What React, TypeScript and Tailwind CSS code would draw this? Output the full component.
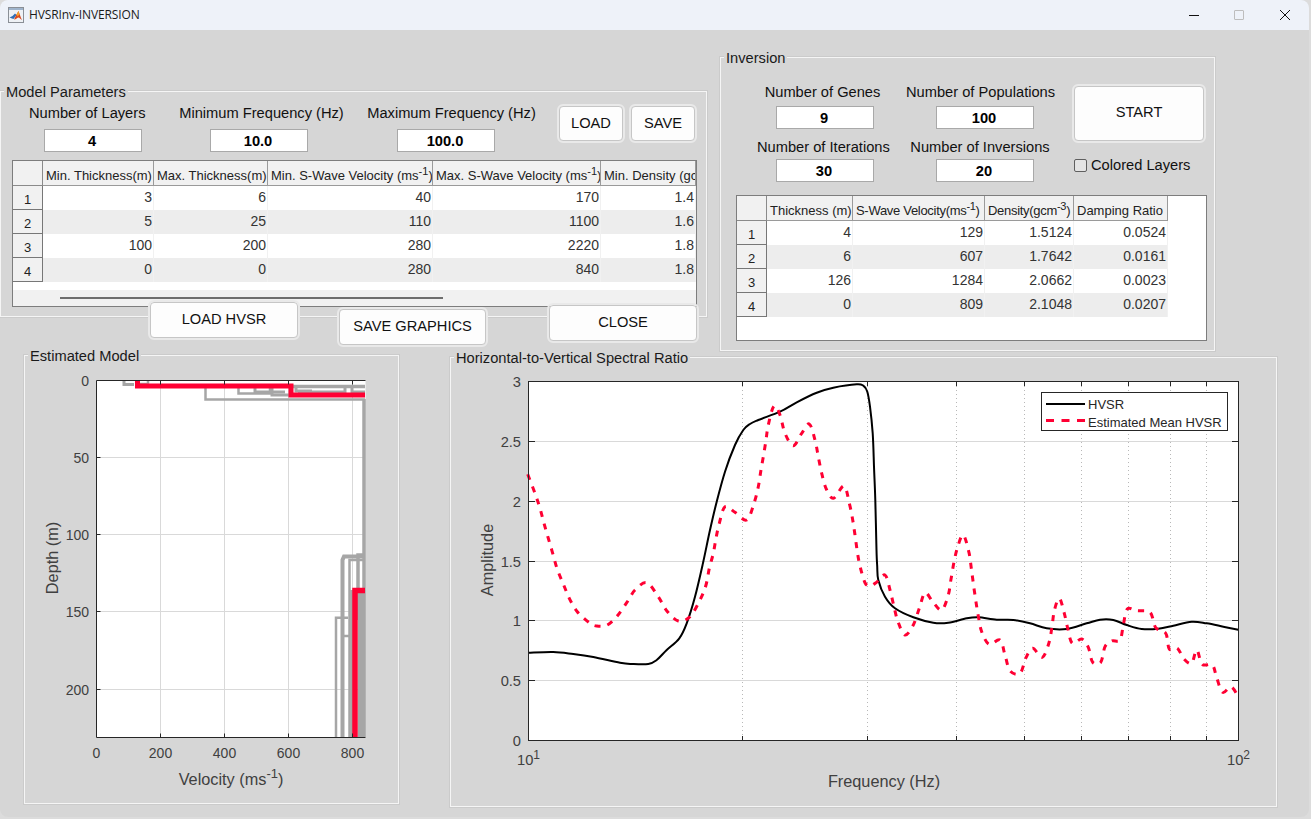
import React from 'react';

type Pt = [number, number];

const hvsr: Pt[] = [[528.3,652.7],[553.3,652],[573.3,654],[593.3,657],[620,662.7],[631.7,664],[648.3,664],[656.7,660],[666.7,650],[679.3,638.3],[686.7,623.3],[695,596.7],[703,563],[710,530],[716.7,501.7],[725,471.7],[735,445],[743.3,430],[750,424],[758.3,420],[780,411.7],[796.7,402.3],[816.7,392.7],[833.3,387.7],[856.7,384.3],[863.3,385.7],[867.3,391.7],[870,406.7],[872.7,433.3],[874,466.7],[875.3,500],[876.5,550],[877.2,566],[878.3,580],[885,596.7],[895,608.3],[913.3,617.3],[933.3,622.7],[948.3,622.7],[966.7,618.3],[978.3,617.3],[996.7,619.7],[1013.3,620],[1030,623.3],[1046.7,628.3],[1066.7,629],[1086.7,623.3],[1100,619.7],[1113.3,620],[1126.7,625],[1141.7,629],[1158.3,628.7],[1173.3,625.7],[1191.7,621.7],[1206.7,623.3],[1223.3,626.7],[1238.3,629.7]];

const estimated: Pt[] = [[527.7,474.3],[535,493.3],[540,508.3],[544,523.3],[548.3,538.3],[552.7,553.3],[557.3,569.3],[563.3,584],[569.3,598.3],[577.3,611.7],[589.3,622.7],[596.7,626],[606.7,625.3],[616.7,616.7],[626.7,602.7],[635,590],[646.7,582.7],[658.3,596.7],[666.7,610.7],[678.3,621],[690,616.7],[700,600],[706,585],[709.3,568.3],[713.3,553.3],[716,538.3],[719.3,523.3],[725,506.7],[735,512.3],[746.7,520],[754,503.3],[758.3,486.7],[760.7,471.7],[763.3,456.7],[766,440],[768.3,425],[774,406],[780,415],[785,433.3],[793.3,445.7],[801.7,433.3],[809.3,424],[815,440],[818.3,456.7],[821.7,473.3],[826,488.3],[833.3,498.3],[844,486],[849.3,503.3],[852.7,520],[855,535],[857.3,551.7],[860,566],[865,582.7],[870,586],[876,582.7],[885,575],[890,590],[894,606.7],[898,621.7],[905,635],[913.3,625],[919.3,608.3],[925,592.7],[932.7,601.7],[941.7,610],[948.3,595],[951,579.3],[954,562],[957.7,546.7],[963.3,535],[969,552.7],[971.3,568.3],[973.3,583.3],[975.7,600],[978.3,616],[981.7,631.7],[989,644.3],[1000,640],[1005,655],[1010,670.7],[1020,673.3],[1026,657.7],[1032.7,648.3],[1042.3,657.3],[1049,642.7],[1052,626.7],[1054.3,610.7],[1059.3,598.3],[1064.3,613.3],[1067.7,628.3],[1072.3,643.3],[1081.7,639],[1088.3,647.3],[1092.7,662.3],[1100.7,662.3],[1105,646.7],[1111.7,641],[1120,640],[1123.3,625],[1127.3,609],[1136.7,610.7],[1150,612.3],[1155.7,627.7],[1165.7,633.3],[1169.3,649],[1177.3,648.3],[1184,659],[1191.7,663.3],[1196.7,650],[1202.3,664.3],[1212.3,665],[1216.7,677.7],[1222.7,692.3],[1231,686.7],[1238.3,696.7]];

// catmull-rom through the traced points
function smooth(pts: Pt[]) {
  let d = `M${pts[0][0]} ${pts[0][1]}`;
  for (let i = 0; i < pts.length - 1; i++) {
    const p0 = pts[Math.max(i - 1, 0)];
    const p1 = pts[i];
    const p2 = pts[i + 1];
    const p3 = pts[Math.min(i + 2, pts.length - 1)];
    const c1x = p1[0] + (p2[0] - p0[0]) / 6;
    const c1y = p1[1] + (p2[1] - p0[1]) / 6;
    const c2x = p2[0] - (p3[0] - p1[0]) / 6;
    const c2y = p2[1] - (p3[1] - p1[1]) / 6;
    d += ` C${c1x.toFixed(1)} ${c1y.toFixed(1)} ${c2x.toFixed(1)} ${c2y.toFixed(1)} ${p2[0]} ${p2[1]}`;
  }
  return d;
}

const grayProfiles: { points: string; w: number }[] = [
  { points: '124,380 124,384.5 134,384.5', w: 3 },
  { points: '148,380 148,384 140,384', w: 2.5 },
  { points: '205.5,388 205.5,399.5 365,399.5', w: 2.5 },
  { points: '238.5,388 238.5,393.5 270,393.5 270,388', w: 2.5 },
  { points: '255,388 255,392 285,392', w: 3 },
  { points: '272,388 272,395 322,395', w: 3 },
  { points: '292,386.5 365,386.5', w: 3.5 },
  { points: '296,385 296,391 312,391', w: 3 },
  { points: '298,392 322,392 345,392 345,385', w: 3 },
  { points: '352,386 352,392 365,392', w: 3 },
  { points: '364,399 364,737', w: 3.5 },
  { points: '342.5,737 342.5,560 344,556.5 365,556.5', w: 4 },
  { points: '349.5,737 349.5,560 365,560', w: 2.5 },
  { points: '336,737 336,617.7 348,617.7', w: 2.5 },
  { points: '358,620 358,555 365,555', w: 3.5 },
  { points: '352,737 352,590', w: 3.5 },
  { points: '361.5,737 361.5,590', w: 7.5 },
  { points: '342,636 349,636', w: 2.5 },
];

const velocityTicks = [
  { x: 96.5, label: '0' },
  { x: 160.5, label: '200' },
  { x: 224.5, label: '400' },
  { x: 288.5, label: '600' },
  { x: 352.5, label: '800' },
];
const depthTicks = [
  { y: 380.5, label: '0' },
  { y: 457.5, label: '50' },
  { y: 534.5, label: '100' },
  { y: 611.5, label: '150' },
  { y: 689.5, label: '200' },
];
const ampTicks = [
  { y: 381.5, label: '3' },
  { y: 441.5, label: '2.5' },
  { y: 501.5, label: '2' },
  { y: 561.5, label: '1.5' },
  { y: 620.5, label: '1' },
  { y: 680.5, label: '0.5' },
  { y: 740.5, label: '0' },
];
const freqLines = [742.5, 867.5, 956.5, 1024.5, 1081.5, 1128.5, 1170.5, 1206.5];

function ModelPlot() {
  return (
    <svg viewBox="25 356 373 447" className="block w-full h-full">
      <rect x="96.5" y="380.5" width="269" height="357" fill="#fff" />
      {velocityTicks.slice(1).map(t => (
        <line key={t.x} x1={t.x} x2={t.x} y1="380" y2="737" stroke="#d9d9d9" />
      ))}
      {depthTicks.slice(1).map(t => (
        <line key={t.y} x1="96" x2="365" y1={t.y} y2={t.y} stroke="#d9d9d9" />
      ))}
      {grayProfiles.map(p => (
        <polyline key={p.points} points={p.points} fill="none" stroke="#a6a6a6" strokeWidth={p.w} />
      ))}
      <polyline points="137.5,380 137.5,386 291,386 291,395 365,395" fill="none" stroke="#ff0033" strokeWidth="5" />
      <polyline points="355,737 355,590.5 365,590.5" fill="none" stroke="#ff0033" strokeWidth="5.5" />
      <path d="M96.5 737.5V380.5H365.5M96.5 737.5H365.5" fill="none" stroke="#262626" />
      {velocityTicks.map(t => (
        <g key={t.label}>
          <line x1={t.x} x2={t.x} y1="737" y2="733.5" stroke="#262626" />
          <line x1={t.x} x2={t.x} y1="381" y2="384.5" stroke="#262626" />
          <text x={t.x} y="758" textAnchor="middle" fontSize="14" fill="#404040">{t.label}</text>
        </g>
      ))}
      {depthTicks.map(t => (
        <g key={t.label}>
          <line x1="97" x2="100.5" y1={t.y} y2={t.y} stroke="#262626" />
          <text x="89" y={t.y + 5} textAnchor="end" fontSize="14" fill="#404040">{t.label}</text>
        </g>
      ))}
      <text x="231" y="785" textAnchor="middle" fontSize="16.3" fill="#404040">
        Velocity (ms<tspan dy="-7" fontSize="13">-1</tspan><tspan dy="7">)</tspan>
      </text>
      <text transform="translate(58 558) rotate(-90)" textAnchor="middle" fontSize="16.3" fill="#404040">Depth (m)</text>
    </svg>
  );
}

function SpectralPlot() {
  return (
    <svg viewBox="451 358 825 448" className="block w-full h-full">
      <rect x="528.5" y="381.5" width="710" height="359" fill="#fff" />
      {ampTicks.slice(1, -1).map(t => (
        <line key={t.y} x1="528" x2="1238" y1={t.y} y2={t.y} stroke="#d9d9d9" />
      ))}
      {freqLines.map(x => (
        <line key={x} x1={x} x2={x} y1="382" y2="740" stroke="#b8b8b8" strokeDasharray="1 3" />
      ))}
      <path d={smooth(hvsr)} fill="none" stroke="#000" strokeWidth="2" />
      <path d={smooth(estimated)} fill="none" stroke="#ff0033" strokeWidth="3" strokeDasharray="6 7" />
      <rect x="528.5" y="381.5" width="710" height="359" fill="none" stroke="#262626" />
      {ampTicks.map(t => (
        <g key={t.label}>
          <line x1="529" x2="535" y1={t.y} y2={t.y} stroke="#262626" />
          <line x1="1232" x2="1238" y1={t.y} y2={t.y} stroke="#262626" />
          <text x="521" y={t.y + 5} textAnchor="end" fontSize="14.67" fill="#404040">{t.label}</text>
        </g>
      ))}
      {freqLines.map(x => (
        <g key={x}>
          <line x1={x} x2={x} y1="740" y2="736" stroke="#262626" />
          <line x1={x} x2={x} y1="382" y2="386" stroke="#262626" />
        </g>
      ))}
      <text x="517" y="765" fontSize="14.67" fill="#404040">10<tspan dy="-6" fontSize="12">1</tspan></text>
      <text x="1227" y="765" fontSize="14.67" fill="#404040">10<tspan dy="-6" fontSize="12">2</tspan></text>
      <text x="884" y="787" textAnchor="middle" fontSize="16.3" fill="#404040">Frequency (Hz)</text>
      <text transform="translate(493 560) rotate(-90)" textAnchor="middle" fontSize="16.3" fill="#404040">Amplitude</text>
      <rect x="1041.5" y="392.5" width="186" height="38" fill="#fff" stroke="#262626" />
      <line x1="1046" x2="1085" y1="404" y2="404" stroke="#000" strokeWidth="2" />
      <line x1="1046" x2="1085" y1="420.5" y2="420.5" stroke="#ff0033" strokeWidth="3" strokeDasharray="8 7.5" />
      <text x="1088" y="409" fontSize="13" fill="#262626">HVSR</text>
      <text x="1088" y="427" fontSize="13" fill="#262626">Estimated Mean HVSR</text>
    </svg>
  );
}

function MatlabIcon() {
  return (
    <svg width="16" height="16" viewBox="0 0 16 16" className="block">
      <rect x="0.5" y="0.5" width="15" height="15" fill="#eef1f5" stroke="#8a8f96" />
      <rect x="1" y="1" width="14" height="2" fill="#9fb4cc" />
      <path d="M1.5 10.5l3-1.5 2.500-2.500 1.500 1.500-3 4-1.500-.5z" fill="#2f6db5" />
      <path d="M6 12.500l2.500-5 2-3.500c1 2.500 2 6 3.500 9-1.500-1-2.500-2.500-3.500-2.500s-2.500 2-4.500 2z" fill="#d9481e" />
      <path d="M8.500 7.500l2-3.500 1 3.500-2 2z" fill="#f2a02c" />
    </svg>
  );
}

function Panel({ title, className, children }: { title: string; className: string; children: React.ReactNode }) {
  return (
    <div className={`relative border border-[#f5f5f5] outline outline-[#cbcbcb] ${className}`}>
      <span className="absolute -top-[8px] left-[3px] bg-[#d6d6d6] px-[2px] leading-[16px] text-[14.67px] text-[#1a1a1a] whitespace-nowrap">
        {title}
      </span>
      {children}
    </div>
  );
}

function Btn({ className, children }: { className: string; children: React.ReactNode }) {
  return (
    <button className={`flex items-center justify-center rounded-[4px] border border-[#c6c6c6] bg-[#fdfdfd] text-[14.67px] text-[#111] outline-2 outline-[#e9e9e9] ${className}`}>
      {children}
    </button>
  );
}

function Field({ label, width, inputLeft, value }: {
  label: string;
  width: string;
  inputLeft: string;
  value: string;
}) {
  return (
    <div className={width}>
      <div className="text-center h-[20px] leading-[20px] text-[14.67px] text-[#111] whitespace-nowrap">{label}</div>
      <div className={`w-[98px] h-[23px] [border-width:1.5px] border-solid border-[#a9a9a9] bg-white flex items-center justify-center pr-[2px] font-bold text-[14.67px] text-black ${inputLeft}`}>
        {value}
      </div>
    </div>
  );
}

function DataTable({ cols, headers, rows, className }: {
  cols: string;
  headers: React.ReactNode[];
  rows: string[][];
  className: string;
}) {
  return (
    <div className={`border border-[#7d7d7d] overflow-hidden bg-white ${className}`}>
      <div className={`grid h-[25px] ${cols}`}>
        <div className="bg-[#f1f1f1] border-r border-b border-[#8a8a8a]" />
        {headers.map((h, i) => (
          <div key={i} className="h-[25px] bg-[#f1f1f1] border-r border-b border-[#9a9a9a] pl-[3px] pt-[6px] text-[13px] leading-[18px] text-[#222] whitespace-nowrap overflow-hidden">
            {h}
          </div>
        ))}
      </div>
      {rows.map((row, i) => (
        <div key={i} className={`grid h-[24px] ${cols}`}>
          <div className="h-[24px] bg-[#f1f1f1] border-r border-b border-[#777] pt-[4px] text-center text-[13px] leading-[19px] text-[#222]">{i + 1}</div>
          {row.map((c, j) => (
            <div key={j} className={`h-[24px] border-r border-[#f1f1f1] text-right pr-[1px] text-[14px] leading-[22px] text-[#333] ${i % 2 ? 'bg-[#ededed]' : 'bg-white'}`}>
              {c}
            </div>
          ))}
        </div>
      ))}
    </div>
  );
}

const Sup = ({ children }: { children: string }) => <sup className="text-[11px]">{children}</sup>;

export default function App() {
  return (
    <div className="w-[1311px] h-[819px] bg-[#dcdcdc] overflow-hidden font-['Liberation_Sans',Arial,sans-serif]">
      <div className="w-[1309px] h-[817px] rounded-[8px] overflow-hidden bg-[#d6d6d6]">
        <div className="h-[30px] bg-[#eef2f9] flex items-center pl-[8px]">
          <MatlabIcon />
          <span className="ml-[5px] font-['Open_Sans',sans-serif] text-[12px] tracking-[-0.1px] text-[#1a1a1a]">HVSRInv-INVERSION</span>
          <div className="ml-auto flex items-center">
            <div className="w-[10px] h-px bg-[#111] mr-[35px]" />
            <div className="w-[10px] h-[10px] border border-[#bdbdbd] rounded-[1px] mr-[35px] -mt-[1px]" />
            <svg width="12" height="12" viewBox="0 0 12 12" className="mr-[18px]">
              <path d="M1 1l10 10M11 1L1 11" stroke="#111" strokeWidth="1" />
            </svg>
          </div>
        </div>

        <div className="flex items-start h-[321px]">
          <div className="w-[707px] mt-[61px]">
            <Panel title="Model Parameters" className="h-[226px] pt-[11px]">
              <div className="flex items-start pl-[28px]">
                <Field label="Number of Layers" width="w-[116px]" inputLeft="ml-[15px] mt-[6px]" value="4" />
                <Field label="Minimum Frequency (Hz)" width="w-[165px] ml-[34px]" inputLeft="ml-[31px] mt-[6px]" value="10.0" />
                <Field label="Maximum Frequency (Hz)" width="w-[169px] ml-[23px]" inputLeft="ml-[30px] mt-[6px]" value="100.0" />
                <Btn className="w-[64px] h-[35px] ml-[23px] mt-[3px] pb-[1px]">LOAD</Btn>
                <Btn className="w-[64px] h-[35px] ml-[8px] mt-[3px] pb-[1px]">SAVE</Btn>
              </div>
              <div className="relative ml-[11px] mt-[8px] w-[685px] h-[147px] bg-[#f1f1f1]">
                <DataTable
                  className="h-[147px]"
                  cols="grid-cols-[30px_111px_114px_165px_168px_95px]"
                  headers={[
                    'Min. Thickness(m)',
                    'Max. Thickness(m)',
                    <>Min. S-Wave Velocity (ms<Sup>-1</Sup>)</>,
                    <>Max. S-Wave Velocity (ms<Sup>-1</Sup>)</>,
                    'Min. Density (gc',
                  ]}
                  rows={[
                    ['3', '6', '40', '170', '1.4'],
                    ['5', '25', '110', '1100', '1.6'],
                    ['100', '200', '280', '2220', '1.8'],
                    ['0', '0', '280', '840', '1.8'],
                  ]}
                />
                <div className="absolute left-px right-px bottom-px h-[16px] bg-[#f1f1f1]">
                  <div className="absolute left-[47px] top-[7px] w-[383px] h-[2px] bg-[#6e6e6e]" />
                </div>
              </div>
            </Panel>
            <div className="relative z-10 flex items-start -mt-[15px]">
              <Btn className="w-[148px] h-[36px] ml-[150px] pb-[2px]">LOAD HVSR</Btn>
              <Btn className="w-[147px] h-[36px] ml-[41px] mt-[7px] pb-[2px]">SAVE GRAPHICS</Btn>
              <Btn className="w-[148px] h-[36px] ml-[63px] mt-[3px] pb-[2px]">CLOSE</Btn>
            </div>
          </div>

          <Panel title="Inversion" className="w-[495px] h-[294px] ml-[13px] mt-[27px] pt-[24px]">
            <div className="flex items-start pl-[36px]">
              <div className="w-[131px]">
                <Field label="Number of Genes" width="w-[131px]" inputLeft="ml-[19px] mt-[4px]" value="9" />
                <div className="h-[8px]" />
                <Field label="Number of Iterations" width="w-[131px]" inputLeft="ml-[19px] mt-[2px]" value="30" />
              </div>
              <div className="w-[148px] ml-[18px]">
                <Field label="Number of Populations" width="w-[148px]" inputLeft="ml-[30px] mt-[4px]" value="100" />
                <div className="h-[8px]" />
                <Field label="Number of Inversions" width="w-[148px]" inputLeft="ml-[30px] mt-[2px]" value="20" />
              </div>
              <div className="ml-[20px]">
                <Btn className="w-[130px] h-[55px] mt-[4px] pb-[3px]">START</Btn>
                <div className="flex items-center mt-[16px] h-[16px]">
                  <input type="checkbox" readOnly className="appearance-none w-[13px] h-[13px] border border-[#5f5f5f] rounded-[2px] bg-[#e4e4e4]" />
                  <span className="ml-[4px] text-[14.67px] text-[#111] whitespace-nowrap">Colored Layers</span>
                </div>
              </div>
            </div>
            <DataTable
              className="ml-[15px] mt-[13px] w-[471px] h-[146px]"
              cols="grid-cols-[30px_86px_132px_89px_94px]"
              headers={[
                'Thickness (m)',
                <span className="tracking-[-0.3px]">S-Wave Velocity(ms<Sup>-1</Sup>)</span>,
                <span className="tracking-[-0.3px]">Density(gcm<Sup>-3</Sup>)</span>,
                'Damping Ratio',
              ]}
              rows={[
                ['4', '129', '1.5124', '0.0524'],
                ['6', '607', '1.7642', '0.0161'],
                ['126', '1284', '2.0662', '0.0023'],
                ['0', '809', '2.1048', '0.0207'],
              ]}
            />
          </Panel>
        </div>

        <div className="flex items-start">
          <Panel title="Estimated Model" className="w-[375px] h-[449px] ml-[24px] mt-[4px]">
            <ModelPlot />
          </Panel>
          <Panel title="Horizontal-to-Vertical Spectral Ratio" className="w-[827px] h-[450px] ml-[51px] mt-[6px]">
            <SpectralPlot />
          </Panel>
        </div>
      </div>
    </div>
  );
}
